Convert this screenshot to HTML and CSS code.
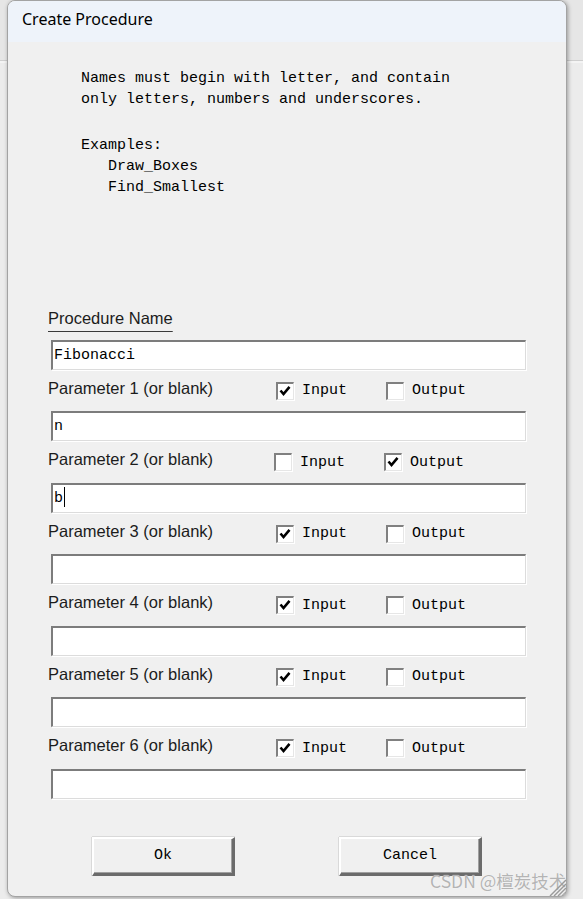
FILE: index.html
```html
<!DOCTYPE html>
<html lang="en">
<head>
<meta charset="utf-8">
<title>Create Procedure</title>
<link rel="stylesheet" href="styles.css">
</head>
<body>
<div class="window">
  <div class="titlebar">Create Procedure</div>
  <div class="help">
    <p>Names must begin with letter, and contain
only letters, numbers and underscores.</p>
    <p>Examples:
   Draw_Boxes
   Find_Smallest</p>
  </div>

  <div class="form">
    <div class="name-row"><span class="label underline">Procedure Name</span></div>
    <div class="field">Fibonacci</div>

    <div class="param-row">
      <span class="label">Parameter 1 (or blank)</span>
      <span class="cb in"><span class="box"><svg viewBox="0 0 18 18"><polyline points="4.5,8.5 7.5,12 13.5,4.8"/></svg></span>Input</span>
      <span class="cb"><span class="box"></span>Output</span>
    </div>
    <div class="field">n</div>

    <div class="param-row shift">
      <span class="label">Parameter 2 (or blank)</span>
      <span class="cb in"><span class="box"></span>Input</span>
      <span class="cb"><span class="box"><svg viewBox="0 0 18 18"><polyline points="4.5,8.5 7.5,12 13.5,4.8"/></svg></span>Output</span>
    </div>
    <div class="field">b<span class="caret"></span></div>

    <div class="param-row">
      <span class="label">Parameter 3 (or blank)</span>
      <span class="cb in"><span class="box"><svg viewBox="0 0 18 18"><polyline points="4.5,8.5 7.5,12 13.5,4.8"/></svg></span>Input</span>
      <span class="cb"><span class="box"></span>Output</span>
    </div>
    <div class="field"></div>

    <div class="param-row">
      <span class="label">Parameter 4 (or blank)</span>
      <span class="cb in"><span class="box"><svg viewBox="0 0 18 18"><polyline points="4.5,8.5 7.5,12 13.5,4.8"/></svg></span>Input</span>
      <span class="cb"><span class="box"></span>Output</span>
    </div>
    <div class="field"></div>

    <div class="param-row">
      <span class="label">Parameter 5 (or blank)</span>
      <span class="cb in"><span class="box"><svg viewBox="0 0 18 18"><polyline points="4.5,8.5 7.5,12 13.5,4.8"/></svg></span>Input</span>
      <span class="cb"><span class="box"></span>Output</span>
    </div>
    <div class="field"></div>

    <div class="param-row">
      <span class="label">Parameter 6 (or blank)</span>
      <span class="cb in"><span class="box"><svg viewBox="0 0 18 18"><polyline points="4.5,8.5 7.5,12 13.5,4.8"/></svg></span>Input</span>
      <span class="cb"><span class="box"></span>Output</span>
    </div>
    <div class="field"></div>
  </div>

  <div class="buttons">
    <button class="btn">Ok</button>
    <button class="btn">Cancel</button>
  </div>

  <div class="watermark">CSDN @檀炭技术</div>
  <svg class="grip" viewBox="0 0 20 20">
    <line x1="4" y1="20" x2="20" y2="4"/>
    <line x1="8" y1="20" x2="20" y2="8"/>
    <line x1="12" y1="20" x2="20" y2="12"/>
    <line x1="16" y1="20" x2="20" y2="16"/>
  </svg>
</div>
</body>
</html>
```

FILE: styles.css
```css
* { box-sizing: border-box; }

html, body {
  margin: 0;
  height: 100%;
}

body {
  overflow: hidden;
  background: linear-gradient(to bottom, #e6e6e6 0, #e6e6e6 60px, #cfcfcf 60px, #cfcfcf 61px, #f4f4f4 61px, #f4f4f4 63px, #ececec 63px);
}

.window {
  position: relative;
  margin-left: 7px;
  width: 560px;
  height: 897px;
  border: 1px solid #a3a3a3;
  border-radius: 8px;
  background: #f0f0f0;
  overflow: hidden;
  box-shadow: 1px 1px 4px rgba(0, 0, 0, 0.35);
}

.titlebar {
  height: 41px;
  padding: 7px 0 0 14px;
  background: #eef3fa;
  font: 16px/22px "Noto Sans", "Liberation Sans", sans-serif;
  color: #000;
}

.help {
  margin-top: 26px;
  padding-left: 73px;
}

.help p {
  margin: 0;
  white-space: pre;
  font: 15px/21px "Liberation Mono", monospace;
  color: #000;
}

.help p + p {
  margin-top: 25px;
}

.form {
  margin-top: 107.5px;
  padding-left: 40px;
}

.label {
  font: 16.5px/19px "Liberation Sans", Arial, sans-serif;
  color: #1c1c1c;
}

.name-row {
  height: 34px;
  padding-top: 1px;
}

.name-row .label {
  line-height: 22px;
}

.underline {
  text-decoration: underline;
  text-underline-offset: 7px;
  text-decoration-thickness: 1px;
  text-decoration-color: #3a3a3a;
}

.field {
  margin-left: 3px;
  width: 475px;
  height: 30px;
  padding-left: 1px;
  background: #fff;
  border-style: solid;
  border-width: 2px 1px 1px 2px;
  border-color: #7c7c7c #dcdcdc #dcdcdc #7c7c7c;
  box-shadow: 1px 1px 0 #fff;
  font: 15px/27px "Liberation Mono", monospace;
  color: #000;
  white-space: pre;
}

.caret {
  display: inline-block;
  width: 1px;
  height: 20px;
  margin-left: 1px;
  vertical-align: -5px;
  background: #000;
}

.param-row {
  display: flex;
  align-items: flex-start;
  height: 41.5px;
  padding-top: 9px;
}

.param-row .label {
  width: 228px;
  flex: none;
}

.param-row.shift .label {
  width: 226px;
}

.cb {
  display: flex;
  align-items: center;
  gap: 8px;
  height: 18px;
  margin-top: 3px;
  font: 15px/19px "Liberation Mono", monospace;
  color: #000;
}

.cb.in {
  width: 110px;
}

.box {
  width: 18px;
  height: 18px;
  flex: none;
  background: #fff;
  border-style: solid;
  border-width: 2px 1px 1px 2px;
  border-color: #808080 #e6e6e6 #e6e6e6 #808080;
  box-shadow: 1px 1px 0 #fff;
  position: relative;
}

.box svg {
  position: absolute;
  left: -2px;
  top: -2px;
  width: 18px;
  height: 18px;
}

.box polyline {
  fill: none;
  stroke: #000;
  stroke-width: 2.6;
  stroke-linejoin: miter;
  stroke-linecap: butt;
}

.buttons {
  display: flex;
  gap: 104px;
  margin-top: 38px;
  padding-left: 84px;
}

.btn {
  width: 143px;
  height: 39px;
  padding: 0;
  background: #f0f0f0;
  border-style: solid;
  border-width: 2px 3px 3px 2px;
  border-color: #ffffff #6b6b6b #6b6b6b #ffffff;
  box-shadow: 0 -1px 0 #d9d9d9, -1px 0 0 #d9d9d9, inset -1px -1px 0 #a0a0a0;
  font: 15px/19px "Liberation Mono", monospace;
  color: #000;
}

.watermark {
  position: absolute;
  left: 422px;
  top: 868px;
  font: 17.5px/24px "Noto Sans CJK SC", "Noto Sans", sans-serif;
  color: #b4b4b4;
  text-shadow: 0 0 1px #fff;
  white-space: nowrap;
}

.grip {
  position: absolute;
  right: 0;
  bottom: 0;
  width: 20px;
  height: 20px;
}

.grip line {
  stroke: #9a9a9a;
  stroke-width: 1.4;
}
```
